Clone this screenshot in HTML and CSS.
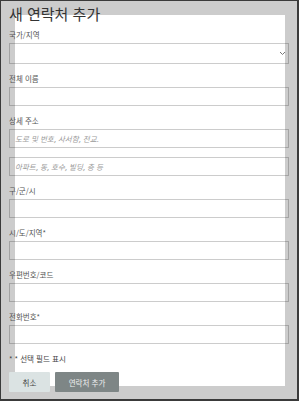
FILE: index.html
```html
<!DOCTYPE html>
<html lang="ko">
<head>
    <meta charset="UTF-8">
    <meta name="viewport" content="width=device-width, initial-scale=1.0">
    <title>새 연락처 추가</title>
    <link rel="stylesheet" href="styles.css">
</head>
<body>
    <form class="contact-form">
        <h1 class="title">새 연락처 추가</h1>

        <!-- Country -->
        <label class="label">국가/지역</label>
        <div class="select-wrap">
            <select class="field select"></select>
            <svg class="chevron" width="7" height="5" viewBox="0 0 7 5">
                <path d="M1 1 L3.5 3.5 L6 1" fill="none" stroke="#777" stroke-width="1"/>
            </svg>
        </div>

        <label class="label">전체 이름</label>
        <input type="text" class="field">

        <label class="label">상세 주소</label>
        <input type="text" class="field" placeholder="도로 및 번호, 사서함, 전교.">
        <input type="text" class="field" placeholder="아파트, 동, 호수, 빌딩, 층 등">

        <label class="label">구/군/시</label>
        <input type="text" class="field">

        <label class="label">시/도/지역*</label>
        <input type="text" class="field">

        <label class="label">우편번호/코드</label>
        <input type="text" class="field">

        <label class="label">전화번호*</label>
        <input type="text" class="field">

        <p class="note">* * 선택 필드 표시</p>

        <div class="actions">
            <button type="button" class="button cancel">취소</button>
            <button type="button" class="button submit">연락처 추가</button>
        </div>
    </form>
</body>
</html>
```

FILE: styles.css
```css
/* Page backdrop */
html {
    height: 100%;
    box-sizing: border-box;
    overflow: hidden;
    border-style: solid;
    border-color: #3a3a3a;
    border-width: 1px 2px 2px 1px;
    background: linear-gradient(#fff, #fff) 14px 14px / 270px 371px no-repeat, #cccccc;
}

body {
    margin: 0 8px;
    padding-top: 4px;
    font-family: "Noto Sans CJK KR", "Noto Sans", sans-serif;
    color: #333;
}

/* Title */
.title {
    margin: 0 0 6px;
    font-size: 15px;
    line-height: 18px;
    font-weight: normal;
    color: #333;
}

/* Labels */
.label {
    display: block;
    font-size: 7.5px;
    line-height: 11px;
    margin-bottom: 3px;
    color: #555;
}

/* Inputs */
.field {
    display: block;
    width: 100%;
    height: 19px;
    margin: 0 0 9px;
    padding: 0 5px;
    box-sizing: border-box;
    border: 1px solid rgba(0, 0, 0, 0.2);
    border-radius: 0;
    background: transparent;
    font-family: inherit;
    font-size: 7.5px;
    color: #333;
    outline: none;
}

.field::placeholder {
    color: #9a9a9a;
    font-style: italic;
}

.select-wrap {
    position: relative;
}

.select {
    height: 21px;
    appearance: none;
}

.chevron {
    position: absolute;
    right: 3px;
    top: 8px;
}

/* Note */
.note {
    margin: 0 0 8px;
    font-size: 7.5px;
    line-height: 11px;
    color: #444;
}

/* Buttons */
.actions {
    display: flex;
    gap: 5px;
}

.button {
    height: 20px;
    border: none;
    border-radius: 1px;
    font-family: inherit;
    font-size: 7.5px;
    cursor: pointer;
}

.button.cancel {
    width: 41px;
    background: #dbe3e3;
    color: #444;
}

.button.submit {
    width: 64px;
    background: #7e8686;
    color: #eef0f0;
}
```
